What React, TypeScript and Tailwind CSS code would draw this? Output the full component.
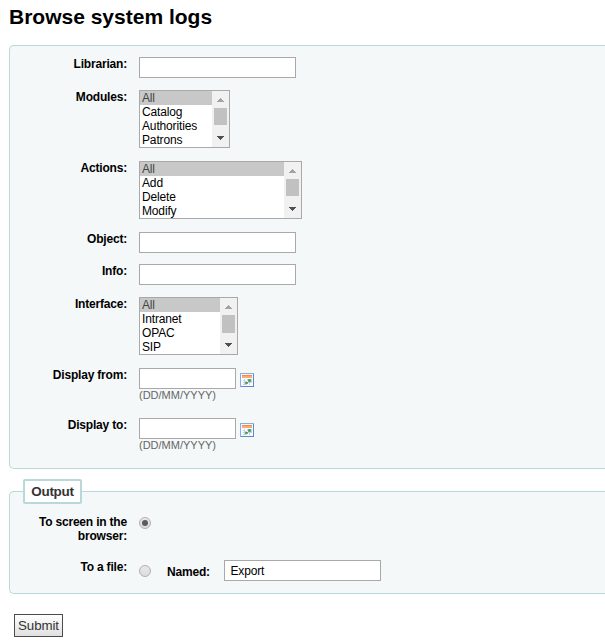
import type { ReactNode } from "react";

function Row({ label, className, children }: { label: string; className: string; children: ReactNode }) {
  return (
    <div className={`flex items-start ${className}`}>
      <label className="mr-3 w-[99px] shrink-0 text-right font-bold tracking-[-0.19px] text-black">{label}</label>
      {children}
    </div>
  );
}

function TextInput({ className = "w-[157px]", label, value }: { className?: string; label: string; value?: string }) {
  return (
    <input
      type="text"
      aria-label={label}
      defaultValue={value}
      className={`block h-[21px] border border-[#a9a9a9] bg-white pr-1.5 pl-[5.5px] text-[12px] tracking-[-0.15px] text-black outline-none ${className}`}
    />
  );
}

function ListBox({ items, className, thumb = "h-[17px]" }: { items: string[]; className: string; thumb?: string }) {
  return (
    <div className={`flex h-[58px] border border-[#a9a9a9] bg-white ${className}`}>
      <ul className="grow tracking-[-0.15px]">
        {items.map((item, i) => (
          <li key={item} className={`h-3.5 pl-0.5 ${i === 0 ? "bg-[#c8c8c8] text-[#444]" : "text-black"}`}>
            {item}
          </li>
        ))}
      </ul>
      <div className="flex w-[17px] shrink-0 flex-col items-center bg-[#f1f1f1]">
        <svg className="mt-[7px] mb-1.5 h-1 w-[7px] shrink-0" viewBox="0 0 7 4" fill="#a3a3a3" shapeRendering="crispEdges">
          <path d="M3 0h1v1h1v1h1v1h1v1H0V3h1V2h1V1h1z" />
        </svg>
        <div className={`w-[13px] shrink-0 bg-[#c1c1c1] ${thumb}`} />
        <svg className="mt-auto mb-[7px] h-1 w-[7px] shrink-0" viewBox="0 0 7 4" fill="#505050" shapeRendering="crispEdges">
          <path d="M0 0h7v1H6v1H5v1H4v1H3V3H2V2H1V1H0z" />
        </svg>
      </div>
    </div>
  );
}

function CalendarIcon() {
  return (
    <svg className="mt-[5px] ml-1 h-3.5 w-3.5" viewBox="0 0 14 14" shapeRendering="crispEdges">
      <rect x=".5" y=".5" width="13" height="13" fill="#f6f9ff" stroke="#86aee4" />
      <path d="M13.5 1v12.5H1" fill="none" stroke="#5b8bd0" />
      <rect x="2" y="2" width="10" height="3" fill="#fbab70" />
      <path d="M2 2h10v1H2z" fill="#f58a48" />
      <path d="M3 6h9v4l-2 2H3z" fill="#c3d2ea" />
      <path d="M3 6h1v1H3zM5 6h2v1H5zM3 8h1v1H3zM5 7h2v1H5zM3 10h1v1H3zM7 8h1v1H7zM7 10h2v2H7zM10 10h2v2h-2z" fill="#fff" />
      <path d="M8 6h3v3H8zM5 9h3v2H5z" fill="#68ae62" />
      <path d="M9 7h1v1H9zM6 9h1v1H6z" fill="#3f8c44" />
    </svg>
  );
}

function DateField({ label }: { label: string }) {
  return (
    <div>
      <div className="flex">
        <TextInput className="w-[97px]" label={label} />
        <CalendarIcon />
      </div>
      <div className="text-[11px] leading-[13px] text-[#666]">(DD/MM/YYYY)</div>
    </div>
  );
}

function Radio({ checked = false, className }: { checked?: boolean; className: string }) {
  return (
    <span
      role="radio"
      aria-checked={checked}
      className={`flex h-3 w-3 shrink-0 items-center justify-center rounded-full border border-[#b0b0b0] bg-linear-to-b from-[#e8e8e8] to-[#dcdcdc] ${className}`}
    >
      {checked && <span className="h-1.5 w-1.5 rounded-full bg-[#5c5c5c]" />}
    </span>
  );
}

export default function App() {
  return (
    <main className="h-[642px] w-[605px] overflow-hidden bg-white font-['Liberation_Sans',Arial,sans-serif] text-[12px] leading-[14px] text-black">
      <h1 className="h-[45px] pt-[5px] pl-[9px] text-[21px] leading-6 font-bold whitespace-nowrap">Browse system logs</h1>

      <section className="ml-[9px] h-[424px] rounded-l-[5px] border border-r-0 border-[#b9d8d9] bg-[#f4f8f9] pt-[11px] pl-[18px]">
        <Row label="Librarian:" className="h-[33px]"><TextInput label="Librarian" /></Row>
        <Row label="Modules:" className="h-[71px]">
          <ListBox items={["All", "Catalog", "Authorities", "Patrons"]} className="w-[91px]" />
        </Row>
        <Row label="Actions:" className="h-[71px]">
          <ListBox items={["All", "Add", "Delete", "Modify"]} className="w-[163px]" />
        </Row>
        <Row label="Object:" className="h-8"><TextInput label="Object" /></Row>
        <Row label="Info:" className="h-[33px]"><TextInput label="Info" /></Row>
        <Row label="Interface:" className="h-[71px]">
          <ListBox items={["All", "Intranet", "OPAC", "SIP"]} className="w-[99px]" thumb="h-[18px]" />
        </Row>
        <Row label="Display from:" className="h-[50px]"><DateField label="Display from" /></Row>
        <Row label="Display to:" className="h-[50px]"><DateField label="Display to" /></Row>
      </section>

      <section className="mt-[22px] ml-[9px] h-[103px] rounded-l-[5px] border border-r-0 border-[#b9d8d9] bg-[#f4f8f9] pl-[18px]">
        <h2 className="-mt-[13px] -ml-[5px] flex h-[25px] w-[59px] items-center justify-center rounded-[2px] border-2 border-[#b9d8d9] bg-white text-[13.5px] font-bold tracking-[-0.3px] text-[#333]">
          Output
        </h2>
        <Row label="To screen in the browser:" className="mt-[11px] h-[45px]"><Radio checked className="mt-0.5" /></Row>
        <Row label="To a file:" className="h-[22px]">
          <Radio className="mt-[5px]" />
          <label className="mt-[5px] ml-4 w-[57px] shrink-0 font-bold tracking-[-0.19px]">Named:</label>
          <TextInput label="Named" value="Export" />
        </Row>
      </section>

      <button className="mt-5 ml-3.5 flex h-[23px] w-[49px] items-center justify-center border border-[#4c4c4c] bg-linear-to-b from-white to-[#e0e0e0] text-[13.33px] tracking-[-0.1px] text-[#333]">
        Submit
      </button>
    </main>
  );
}
